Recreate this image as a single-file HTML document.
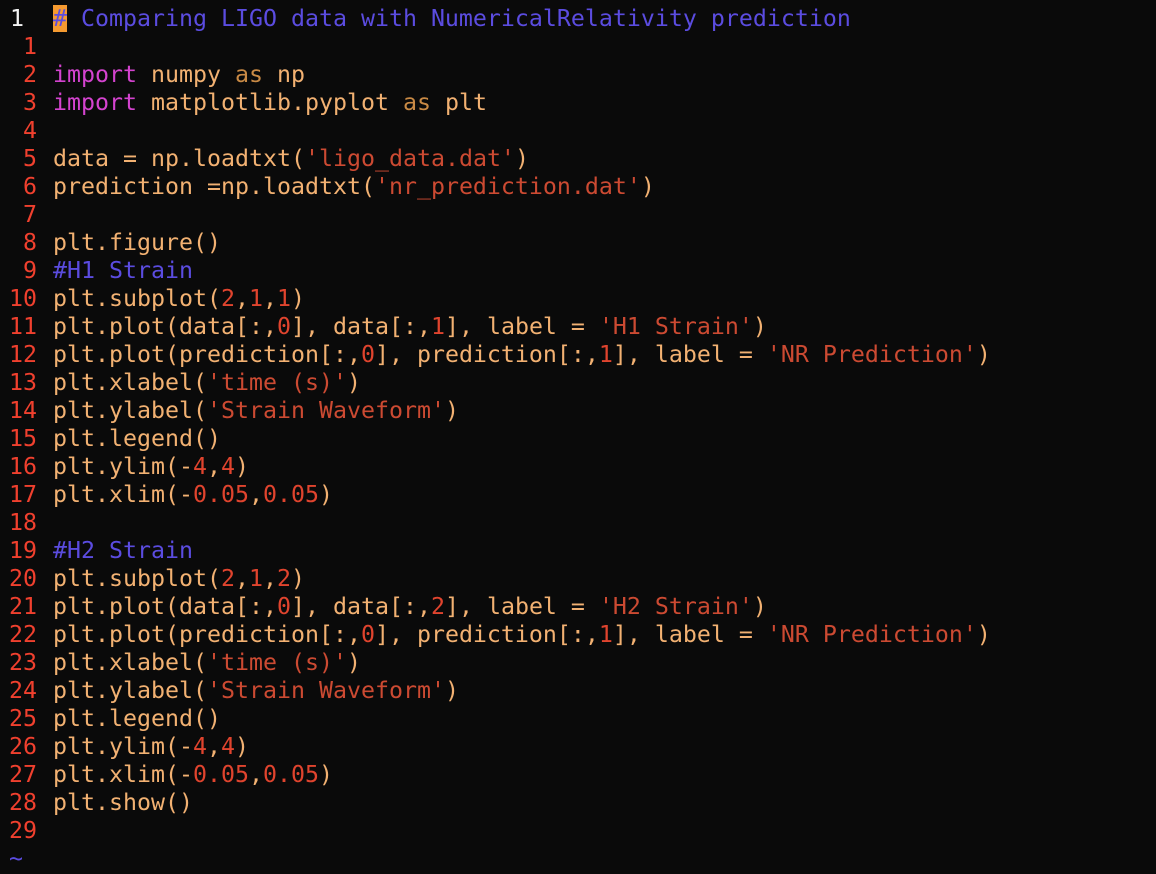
<!DOCTYPE html>
<html><head><meta charset="utf-8"><style>
html,body{margin:0;padding:0;background:#0a0a0a;width:1156px;height:874px;overflow:hidden}
.c{position:absolute;top:5px;left:0;width:1156px;font-family:"DejaVu Sans Mono","Liberation Mono",monospace;font-size:23.25px;line-height:28px;color:#f2b172}
.l{height:28px;position:relative;white-space:pre}
.n{position:absolute;right:1119px;color:#f0402e}
.cur{position:absolute;left:10px;color:#f4f4f4}
.t{position:absolute;left:53px}
.k{color:#d443cf}.a{color:#c98a45}.s{color:#cc4a32}.d{color:#e0442e}.m{color:#5b4ce0}
.h{background:#f59a30;color:#5b4ce0}
.til{color:#5b4ce0;position:absolute;left:9px}
</style></head><body><div class="c"><div class="l"><span class="cur">1</span><span class="t"><span class="h">#</span><span class="m"> Comparing LIGO data with NumericalRelativity prediction</span></span></div><div class="l"><span class="n">1</span></div><div class="l"><span class="n">2</span><span class="t"><span class="k">import</span> numpy <span class="a">as</span> np</span></div><div class="l"><span class="n">3</span><span class="t"><span class="k">import</span> matplotlib.pyplot <span class="a">as</span> plt</span></div><div class="l"><span class="n">4</span></div><div class="l"><span class="n">5</span><span class="t">data = np.loadtxt(<span class="s">'ligo_data.dat'</span>)</span></div><div class="l"><span class="n">6</span><span class="t">prediction =np.loadtxt(<span class="s">'nr_prediction.dat'</span>)</span></div><div class="l"><span class="n">7</span></div><div class="l"><span class="n">8</span><span class="t">plt.figure()</span></div><div class="l"><span class="n">9</span><span class="t"><span class="m">#H1 Strain</span></span></div><div class="l"><span class="n">10</span><span class="t">plt.subplot(<span class="d">2</span>,<span class="d">1</span>,<span class="d">1</span>)</span></div><div class="l"><span class="n">11</span><span class="t">plt.plot(data[:,<span class="d">0</span>], data[:,<span class="d">1</span>], label = <span class="s">'H1 Strain'</span>)</span></div><div class="l"><span class="n">12</span><span class="t">plt.plot(prediction[:,<span class="d">0</span>], prediction[:,<span class="d">1</span>], label = <span class="s">'NR Prediction'</span>)</span></div><div class="l"><span class="n">13</span><span class="t">plt.xlabel(<span class="s">'time (s)'</span>)</span></div><div class="l"><span class="n">14</span><span class="t">plt.ylabel(<span class="s">'Strain Waveform'</span>)</span></div><div class="l"><span class="n">15</span><span class="t">plt.legend()</span></div><div class="l"><span class="n">16</span><span class="t">plt.ylim(-<span class="d">4</span>,<span class="d">4</span>)</span></div><div class="l"><span class="n">17</span><span class="t">plt.xlim(-<span class="d">0.05</span>,<span class="d">0.05</span>)</span></div><div class="l"><span class="n">18</span></div><div class="l"><span class="n">19</span><span class="t"><span class="m">#H2 Strain</span></span></div><div class="l"><span class="n">20</span><span class="t">plt.subplot(<span class="d">2</span>,<span class="d">1</span>,<span class="d">2</span>)</span></div><div class="l"><span class="n">21</span><span class="t">plt.plot(data[:,<span class="d">0</span>], data[:,<span class="d">2</span>], label = <span class="s">'H2 Strain'</span>)</span></div><div class="l"><span class="n">22</span><span class="t">plt.plot(prediction[:,<span class="d">0</span>], prediction[:,<span class="d">1</span>], label = <span class="s">'NR Prediction'</span>)</span></div><div class="l"><span class="n">23</span><span class="t">plt.xlabel(<span class="s">'time (s)'</span>)</span></div><div class="l"><span class="n">24</span><span class="t">plt.ylabel(<span class="s">'Strain Waveform'</span>)</span></div><div class="l"><span class="n">25</span><span class="t">plt.legend()</span></div><div class="l"><span class="n">26</span><span class="t">plt.ylim(-<span class="d">4</span>,<span class="d">4</span>)</span></div><div class="l"><span class="n">27</span><span class="t">plt.xlim(-<span class="d">0.05</span>,<span class="d">0.05</span>)</span></div><div class="l"><span class="n">28</span><span class="t">plt.show()</span></div><div class="l"><span class="n">29</span></div><div class="l"><span class="til">~</span></div></div></body></html>
